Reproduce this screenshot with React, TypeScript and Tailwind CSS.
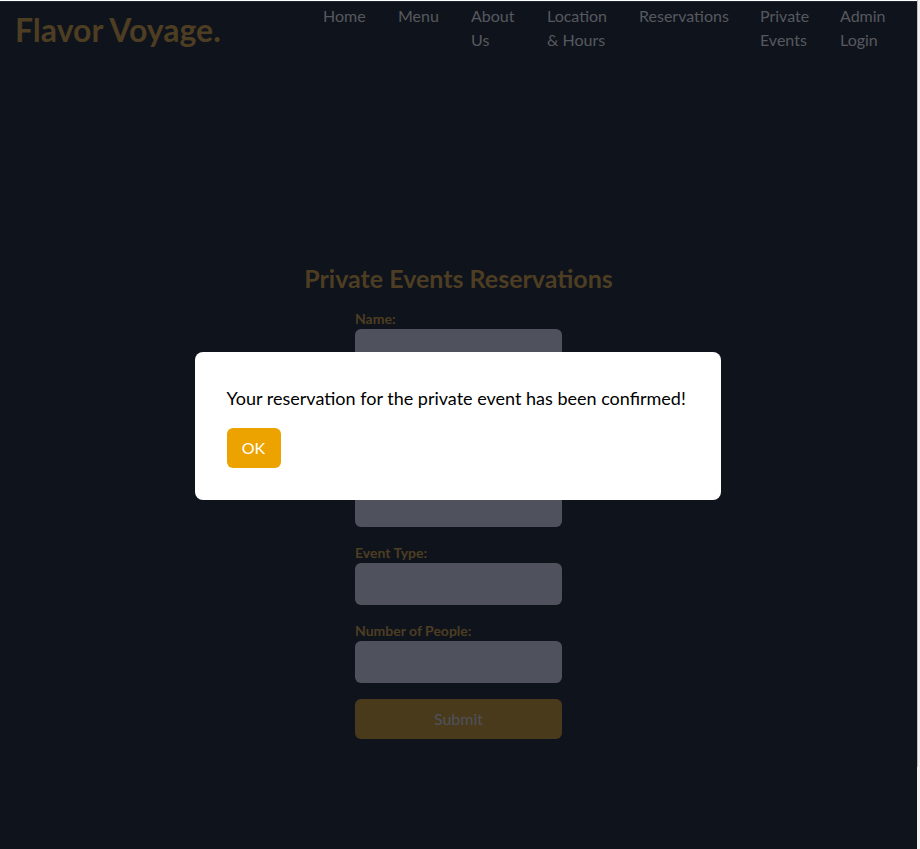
const NAV = [
  { label: ['Home'], w: 'w-[43px]' },
  { label: ['Menu'], w: 'w-[41px]' },
  { label: ['About', 'Us'], w: 'w-[44px]' },
  { label: ['Location', '& Hours'], w: 'w-[60px]' },
  { label: ['Reservations'], w: 'w-[89px]' },
  { label: ['Private', 'Events'], w: 'w-[48px]' },
  { label: ['Admin', 'Login'], w: 'w-[47px]' },
]

const FIELDS = ['Name:', 'Email:', 'Date:', 'Event Type:', 'Number of People:']

function Header() {
  return (
    <header className="flex justify-between items-start pl-[15px] pr-[30px] pt-[3px] h-[60px]">
      <div className="text-[32px] leading-9 font-bold text-[#9a7b44] mt-2">Flavor Voyage.</div>
      <nav className="flex gap-8 text-base leading-6 text-[#acb0bc]">
        {NAV.map((item) => (
          <div key={item.label[0]} className={item.w}>
            {item.label.map((line) => (
              <div key={line}>{line}</div>
            ))}
          </div>
        ))}
      </nav>
    </header>
  )
}

function ReservationForm() {
  return (
    <section className="flex flex-col items-center pt-[201px]">
      <h1 className="text-[25px] leading-8 font-bold text-[#9a7b44] mb-[15px]">Private Events Reservations</h1>
      <form className="w-[207px] flex flex-col">
        {FIELDS.map((f) => (
          <div key={f} className="mb-4">
            <label className="block text-sm leading-5 font-bold text-[#9a7b44]">{f}</label>
            <input className="block w-full h-[42px] rounded-md bg-[#9ea5bb]" />
          </div>
        ))}
        <button type="button" className="h-10 rounded-md bg-[#947438] text-[#9ca3b5] text-base">
          Submit
        </button>
      </form>
    </section>
  )
}

function ConfirmModal() {
  return (
    <div className="fixed top-[2px] left-0 bottom-0 right-[3px] bg-black/50 flex items-center justify-center">
      <div className="bg-white rounded-lg p-8 w-[526px] -translate-x-px">
        <p className="text-lg leading-7 text-black">Your reservation for the private event has been confirmed!</p>
        <button type="button" className="mt-4 h-10 w-[54px] rounded-md bg-[#eca300] text-white text-base">
          OK
        </button>
      </div>
    </div>
  )
}

export default function App() {
  return (
    <div className="flex h-[849px] overflow-hidden bg-[#f1f1f1]" style={{ fontFamily: 'Lato, "Open Sans", sans-serif' }}>
      <div className="flex-1 bg-[#1e2638] border-t border-white">
        <Header />
        <ReservationForm />
      </div>
      {/* scrollbar remnant on the right edge */}
      <div className="w-[3px] flex">
        <div className="w-px h-[767px] bg-[#c4c4c4]" />
      </div>
      <ConfirmModal />
    </div>
  )
}
